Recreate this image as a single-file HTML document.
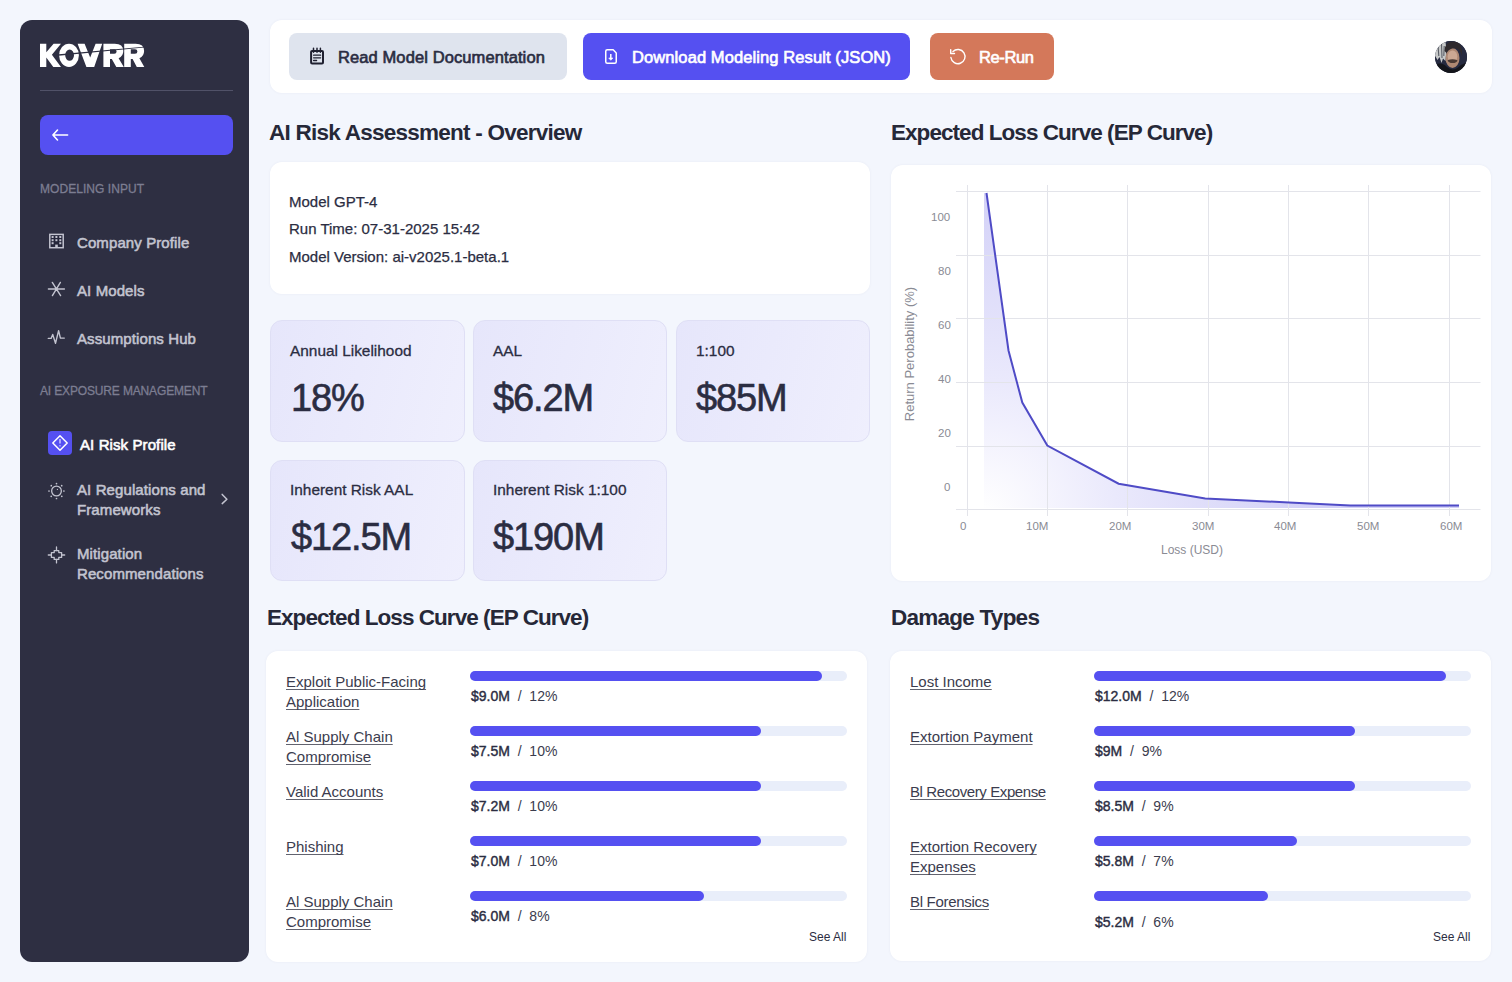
<!DOCTYPE html>
<html><head><meta charset="utf-8">
<style>
*{box-sizing:border-box;margin:0;padding:0}
html,body{width:1512px;height:982px;overflow:hidden;background:#F3F6FD;font-family:"Liberation Sans",sans-serif;color:#2B2D42}
.a{position:absolute}
.t{position:absolute;white-space:nowrap;line-height:1}
#side{left:20px;top:20px;width:229px;height:942px;background:#2E2F42;border-radius:12px}
.sec{font-size:12px;color:#7C7D91;letter-spacing:0.05px;-webkit-text-stroke:0.3px #7C7D91}
.item{font-size:15px;font-weight:400;color:#C3C4D0;letter-spacing:0.1px;-webkit-text-stroke:0.55px #C3C4D0}
.card{background:#fff;border-radius:12px;box-shadow:0 0 3px rgba(40,40,90,0.05)}
.btn{border-radius:8px;top:33px;height:47px}
.btxt{font-size:16.5px;font-weight:400;letter-spacing:0.1px;-webkit-text-stroke:0.65px currentColor}
.h2{font-size:22.5px;font-weight:700;color:#262838;letter-spacing:-0.75px}
.metric{border-radius:12px;border:1px solid #DFDFF5;background:linear-gradient(105deg,#E6E6FB 0%,#EAEAFC 45%,#EFEFFD 100%)}
.ml{font-size:15.4px;color:#2B2D42;-webkit-text-stroke:0.3px #2B2D42}
.mv{font-size:38px;color:#2B2D42;-webkit-text-stroke:0.6px #2B2D42;letter-spacing:-1.1px}
.lbl{font-size:15px;color:#3B3C4E;text-decoration:underline;text-underline-offset:1.5px;text-decoration-thickness:1px;text-decoration-skip-ink:none;text-decoration-color:#62636F;line-height:20px;white-space:normal}
.track{height:10px;border-radius:5px;background:#E9EEFA}
.fill{height:10px;border-radius:5px;background:#5550F1;left:0;top:0}
.val{font-size:14px;color:#3B3C4E}
.val b{color:#2B2D42;font-weight:400;-webkit-text-stroke:0.4px #2B2D42}
.ax{font-size:11.5px;color:#8A8B94}
</style></head><body>

<!-- SIDEBAR -->
<div id="side" class="a"></div>
<svg class="a" style="left:0;top:0" width="260" height="100"><g fill="#FFFFFF">
  <path d="M40 43.7H46.3V52.3L53.6 43.7H61L51.9 54.8L61 66.9H53.3L46.3 57.4V66.9H40Z"/>
  <path fill-rule="evenodd" d="M69 43.7A9.9 11.6 0 1 1 69 66.9A9.9 11.6 0 1 1 69 43.7ZM69.6 49.6A4.4 5.6 0 1 0 69.6 60.8A4.4 5.6 0 1 0 69.6 49.6Z"/>
  <path d="M77.6 43.7H84.6L90.2 57.5L95.6 43.7H102.2L94.2 66.9H86.4Z"/>
  <path fill-rule="evenodd" d="M103.4 43.7H114.8Q123.3 43.7 123.3 51Q123.3 56.3 118.6 58.2L123.8 66.9H116.3L111.8 59H110V66.9H103.4ZM110 49.2V53.8H114.2Q116.6 53.8 116.6 51.5Q116.6 49.2 114.2 49.2Z"/>
  <path fill-rule="evenodd" d="M124.2 43.7H135.6Q144.1 43.7 144.1 51Q144.1 56.3 139.4 58.2L144.3 66.9H136.8L132.6 59H130.8V66.9H124.2ZM130.8 49.2V53.8H135Q137.4 53.8 137.4 51.5Q137.4 49.2 135 49.2Z"/>
</g>
<path d="M56 54.6L144 46.8L144 47.5L56 56Z" fill="#2E2F42"/>
</svg>
<div class="a" style="left:40px;top:90px;width:193px;height:1px;background:#515268"></div>
<div class="a" style="left:40px;top:115px;width:193px;height:40px;background:#5550F1;border-radius:8px"></div>
<svg class="a" style="left:44px;top:122px" width="32" height="26" viewBox="0 0 32 26" fill="none" stroke="#fff" stroke-width="1.6" stroke-linecap="round" stroke-linejoin="round"><path d="M8.9 13H23.6M13.5 8L8.9 13L13.5 18"/></svg>

<div class="t sec" style="left:40px;top:183px">MODELING INPUT</div>

<svg class="a" style="left:44px;top:228px" width="26" height="26" viewBox="0 0 26 26"><rect x="5.8" y="6.4" width="13.4" height="13.3" fill="#25263A" stroke="#C3C4D0" stroke-width="1.5"/><g fill="#C3C4D0"><rect x="7.6" y="8" width="2" height="2"/><rect x="11.4" y="8" width="2" height="2"/><rect x="15.3" y="8" width="2" height="2"/><rect x="7.6" y="11.2" width="2" height="2"/><rect x="11.4" y="11.2" width="2" height="2"/><rect x="15.3" y="11.2" width="2" height="2"/><rect x="7.6" y="14.2" width="2" height="2"/><rect x="15.3" y="14.2" width="2" height="2"/><rect x="11.2" y="16.6" width="2.6" height="2.6"/></g></svg>
<div class="t item" style="left:77px;top:235px">Company Profile</div>

<svg class="a" style="left:44px;top:276px" width="26" height="26" viewBox="0 0 26 26" fill="none" stroke="#C3C4D0" stroke-width="1.4" stroke-linecap="round"><path d="M4.4 13H20.4M8.3 6.4L16.6 19.6M16.4 6.4L8.4 19.6"/></svg>
<div class="t item" style="left:77px;top:283px">AI Models</div>

<svg class="a" style="left:44px;top:324px" width="26" height="26" viewBox="0 0 26 26" fill="none" stroke="#C3C4D0" stroke-width="1.4" stroke-linecap="round" stroke-linejoin="round"><path d="M4.3 14.4H7.1L8.7 10.4L11.5 19.3L14.6 6.6L16.4 14.1H20.3"/></svg>
<div class="t item" style="left:77px;top:331px">Assumptions Hub</div>

<div class="t sec" style="left:40px;top:385px;letter-spacing:-0.15px">AI EXPOSURE MANAGEMENT</div>

<div class="a" style="left:48px;top:431px;width:24px;height:24px;background:#5550F1;border-radius:4px"></div>
<svg class="a" style="left:48px;top:431px" width="24" height="24" viewBox="0 0 24 24" fill="none" stroke-width="1.5"><path d="M12 4.8L19.2 12L12 19.2L4.8 12Z" stroke="#fff" stroke-linejoin="round"/><path d="M12 8V12.6" stroke="#C8C4FF"/><path d="M12 14.1V15.4" stroke="#B0AAFF"/></svg>
<div class="t item" style="left:80px;top:437px;color:#fff;-webkit-text-stroke:0.6px #fff">AI Risk Profile</div>

<svg class="a" style="left:43px;top:478px" width="26" height="26" viewBox="0 0 26 26"><circle cx="13.5" cy="13" r="4.85" fill="none" stroke="#C3C4D0" stroke-width="1.3"/><g fill="#C3C4D0"><circle cx="13.5" cy="5.6" r="0.85"/><circle cx="18.7" cy="7.7" r="0.85"/><circle cx="20.9" cy="13" r="0.85"/><circle cx="18.8" cy="18.3" r="0.85"/><circle cx="13.5" cy="20.5" r="0.85"/><circle cx="8.2" cy="18.3" r="0.85"/><circle cx="6" cy="13" r="0.85"/><circle cx="8.3" cy="7.7" r="0.85"/><circle cx="14.4" cy="11.4" r="0.6"/></g></svg>
<div class="t item" style="left:77px;top:480px;line-height:20px">AI Regulations and<br>Frameworks</div>
<svg class="a" style="left:212px;top:486px" width="24" height="24" viewBox="0 0 24 24" fill="none" stroke="#C3C4D0" stroke-width="1.5" stroke-linecap="round" stroke-linejoin="round"><path d="M10.2 8.4L14.9 13.3L10.2 17.6"/></svg>

<svg class="a" style="left:43px;top:542px" width="26" height="26" viewBox="0 0 26 26" fill="none" stroke="#C3C4D0" stroke-width="1.3" stroke-linejoin="round"><path d="M11.2 8.6H15.8V10.6H18.6V15.4H15.8V17.4H11.2V15.4H8.4V10.6H11.2Z"/><path d="M13.5 5V8.6M13.5 17.4V20.9M5.3 13H8.4M18.6 13H21.7" stroke-linecap="round"/></svg>
<div class="t item" style="left:77px;top:544px;line-height:20px">Mitigation<br>Recommendations</div>

<!-- HEADER -->
<div class="a card" style="left:270px;top:20px;width:1222px;height:73px"></div>
<div class="a btn" style="left:289px;width:278px;background:#DFE4EE"></div>
<svg class="a" style="left:300px;top:40px" width="35" height="32" viewBox="0 0 35 32" fill="none" stroke="#1F2030" stroke-linecap="round"><rect x="11.1" y="10.9" width="11.9" height="12.5" rx="1" stroke-width="2"/><path d="M13.5 8.2V12.2M17 8.2V12.2M20.4 8.2V12.2" stroke-width="1.5"/><path d="M13.6 15.2H20.6M13.6 17.8H20.6M13.6 20.5H16.6" stroke-width="1.3"/></svg>
<div class="t btxt" style="left:338px;top:49px;color:#2B2D42">Read Model Documentation</div>

<div class="a btn" style="left:583px;width:327px;background:#5550F1"></div>
<svg class="a" style="left:598px;top:42px" width="28" height="28" viewBox="0 0 28 28" fill="none" stroke="#fff" stroke-width="1.5" stroke-linejoin="round"><path d="M9.3 7.75H15.2L18.25 10.9V19.7Q18.25 21.25 16.7 21.25H9.3Q7.75 21.25 7.75 19.7V9.3Q7.75 7.75 9.3 7.75Z"/><path d="M12.8 12V16.4"/><path d="M10.7 16L14.9 16L12.8 18.3Z" fill="#fff" stroke-width="0.6"/></svg>
<div class="t btxt" style="left:632px;top:49px;color:#fff">Download Modeling Result (JSON)</div>

<div class="a btn" style="left:930px;width:124px;background:#D4785A"></div>
<svg class="a" style="left:944px;top:42px" width="28" height="28" viewBox="0 0 28 28" fill="none" stroke="#fff" stroke-width="1.4" stroke-linecap="round" stroke-linejoin="round"><path d="M6.9 15.5A7.1 7.1 0 1 0 8.98 9.48"/><path d="M6.7 7.6V11.5H10.5"/></svg>
<div class="t btxt" style="left:979px;top:48.5px;color:#fff;font-size:16.5px;letter-spacing:-0.4px">Re-Run</div>

<div class="a" style="left:1435px;top:41px;width:32px;height:32px;border-radius:50%;overflow:hidden;background:#262A40"><svg style="display:block;filter:blur(0.45px)" width="32" height="32" viewBox="0 0 32 32">
<rect width="32" height="32" fill="#262A40"/>
<path d="M-1 2L10.5 1L11.5 9L10.5 20L8 17.5L6.5 22L4.5 16L2.5 19L-1 13Z" fill="#C6C8C8"/>
<path d="M3 4L3.8 15M6.5 3L7 17M9.2 5L8.8 15" stroke="#5A5E66" stroke-width="1.1"/>
<ellipse cx="17.5" cy="17" rx="7" ry="10" fill="#AE8873"/>
<ellipse cx="17.5" cy="15.5" rx="4.8" ry="6" fill="#CCA893"/>
<path d="M9.5 10Q10 0 19 0.5Q28 1 27 15Q25.5 8 21 7.5Q15 6.5 11.5 12Z" fill="#2F2A2D"/>
<path d="M12.5 19.2Q17.5 17.5 22.5 19.2Q22 22 17.5 22Q13.5 22 12.5 19.2Z" fill="#4B3A34"/>
<path d="M-1 24Q7 20 12 26Q17.5 30.5 23 26.5Q27 23 33 21V33H-1Z" fill="#14151B"/>
</svg></div>

<!-- OVERVIEW -->
<div class="t h2" style="left:269px;top:121.5px">AI Risk Assessment - Overview</div>
<div class="a card" style="left:270px;top:162px;width:600px;height:132px"></div>
<div class="t" style="left:289px;top:187.8px;font-size:15px;color:#2B2D42;line-height:27.4px;-webkit-text-stroke:0.25px #2B2D42">Model GPT-4<br>Run Time: 07-31-2025 15:42<br>Model Version: ai-v2025.1-beta.1</div>

<div class="a metric" style="left:270px;top:320px;width:194.5px;height:121.5px"></div>
<div class="a metric" style="left:473px;top:320px;width:194px;height:121.5px"></div>
<div class="a metric" style="left:675.5px;top:320px;width:194.5px;height:121.5px"></div>
<div class="a metric" style="left:270px;top:459.5px;width:194.5px;height:121.5px"></div>
<div class="a metric" style="left:473px;top:459.5px;width:194px;height:121.5px"></div>

<div class="t ml" style="left:290px;top:343px">Annual Likelihood</div>
<div class="t mv" style="left:291px;top:379px">18%</div>
<div class="t ml" style="left:493px;top:343px">AAL</div>
<div class="t mv" style="left:493px;top:379px">$6.2M</div>
<div class="t ml" style="left:696px;top:343px">1:100</div>
<div class="t mv" style="left:696px;top:379px">$85M</div>
<div class="t ml" style="left:290px;top:482px">Inherent Risk AAL</div>
<div class="t mv" style="left:291px;top:518px">$12.5M</div>
<div class="t ml" style="left:493px;top:482px">Inherent Risk 1:100</div>
<div class="t mv" style="left:493px;top:518px">$190M</div>

<!-- CHART -->
<div class="t h2" style="left:891px;top:121.5px;letter-spacing:-0.95px">Expected Loss Curve (EP Curve)</div>
<div class="a card" style="left:891px;top:165px;width:600px;height:416px"></div>
<svg class="a" style="left:0;top:0" width="1512" height="982">
  <defs>
    <radialGradient id="gf" gradientUnits="userSpaceOnUse" cx="984" cy="512" r="330">
      <stop offset="0" stop-color="#FFFFFF"/>
      <stop offset="0.4" stop-color="#EAE9FC"/>
      <stop offset="1" stop-color="#D2D0F7"/>
    </radialGradient>
  </defs>
  
  <path d="M984 193 L986.5 193 L1008.5 350.5 L1022.3 402.6 L1047.3 445.6 L1118.6 483.7 L1205.2 498.6 L1289 502.5 L1350.3 505.4 L1459 505.4 L1459 508 L984 508 Z" fill="url(#gf)"/>
  <g stroke="#E3E4EA" stroke-width="1">
    <path d="M956 191.5H1480.5M956 255.5H1480.5M956 318.5H1480.5M956 382.5H1480.5M956 446.5H1480.5M956 509.5H1480.5"/>
    <path d="M967.5 185V516M1047.5 185V516M1127.5 185V516M1208.5 185V516M1288.5 185V516M1368.5 185V516M1449.5 185V516"/>
  </g>
  <path d="M986.5 193 L1008.5 350.5 L1022.3 402.6 L1047.3 445.6 L1118.6 483.7 L1205.2 498.6 L1289 502.5 L1350.3 505.4 L1459 505.4" fill="none" stroke="#4F4BC6" stroke-width="2"/>
</svg>
<div class="t ax" style="left:931px;top:212px">100</div>
<div class="t ax" style="left:938px;top:266px">80</div>
<div class="t ax" style="left:938px;top:320px">60</div>
<div class="t ax" style="left:938px;top:374px">40</div>
<div class="t ax" style="left:938px;top:428px">20</div>
<div class="t ax" style="left:944px;top:482px">0</div>
<div class="t ax" style="left:960px;top:521px">0</div>
<div class="t ax" style="left:1026px;top:521px">10M</div>
<div class="t ax" style="left:1109px;top:521px">20M</div>
<div class="t ax" style="left:1192px;top:521px">30M</div>
<div class="t ax" style="left:1274px;top:521px">40M</div>
<div class="t ax" style="left:1357px;top:521px">50M</div>
<div class="t ax" style="left:1440px;top:521px">60M</div>
<div class="t ax" style="left:1161px;top:544px;font-size:12px">Loss (USD)</div>
<div class="t ax" style="left:908.5px;top:354px;font-size:13px;transform:translate(-50%,-50%) rotate(-90deg)">Return Perobability (%)</div>

<!-- BOTTOM LEFT -->
<div class="t h2" style="left:267px;top:606.5px;letter-spacing:-0.95px">Expected Loss Curve (EP Curve)</div>
<div class="a card" style="left:266px;top:651px;width:601px;height:311px"></div>

<div class="t lbl" style="left:286px;top:672px">Exploit Public-Facing<br>Application</div>
<div class="a track" style="left:470px;top:671px;width:377px"><div class="a fill" style="width:352.0px"></div></div>
<div class="t val" style="left:471px;top:688.5px"><b>$9.0M</b>&nbsp;&nbsp;/&nbsp;&nbsp;12%</div>
<div class="t lbl" style="left:286px;top:727px">Al Supply Chain<br>Compromise</div>
<div class="a track" style="left:470px;top:726px;width:377px"><div class="a fill" style="width:291.0px"></div></div>
<div class="t val" style="left:471px;top:743.5px"><b>$7.5M</b>&nbsp;&nbsp;/&nbsp;&nbsp;10%</div>
<div class="t lbl" style="left:286px;top:782px">Valid Accounts</div>
<div class="a track" style="left:470px;top:780.5px;width:377px"><div class="a fill" style="width:291.0px"></div></div>
<div class="t val" style="left:471px;top:798.5px"><b>$7.2M</b>&nbsp;&nbsp;/&nbsp;&nbsp;10%</div>
<div class="t lbl" style="left:286px;top:837px">Phishing</div>
<div class="a track" style="left:470px;top:835.5px;width:377px"><div class="a fill" style="width:291.0px"></div></div>
<div class="t val" style="left:471px;top:853.5px"><b>$7.0M</b>&nbsp;&nbsp;/&nbsp;&nbsp;10%</div>
<div class="t lbl" style="left:286px;top:892px">Al Supply Chain<br>Compromise</div>
<div class="a track" style="left:470px;top:890.5px;width:377px"><div class="a fill" style="width:233.5px"></div></div>
<div class="t val" style="left:471px;top:908.5px"><b>$6.0M</b>&nbsp;&nbsp;/&nbsp;&nbsp;8%</div>
<div class="t" style="left:809px;top:931px;font-size:12px;color:#2B2D42">See All</div>

<!-- BOTTOM RIGHT -->
<div class="t h2" style="left:891px;top:606.5px">Damage Types</div>
<div class="a card" style="left:890px;top:651px;width:601px;height:310px"></div>

<div class="t lbl" style="left:910px;top:672px">Lost Income</div>
<div class="a track" style="left:1094px;top:671px;width:376.5px"><div class="a fill" style="width:351.5px"></div></div>
<div class="t val" style="left:1095px;top:688.5px"><b>$12.0M</b>&nbsp;&nbsp;/&nbsp;&nbsp;12%</div>
<div class="t lbl" style="left:910px;top:727px">Extortion Payment</div>
<div class="a track" style="left:1094px;top:726px;width:376.5px"><div class="a fill" style="width:261.0px"></div></div>
<div class="t val" style="left:1095px;top:743.5px"><b>$9M</b>&nbsp;&nbsp;/&nbsp;&nbsp;9%</div>
<div class="t lbl" style="left:910px;top:782px;letter-spacing:-0.4px">Bl Recovery Expense</div>
<div class="a track" style="left:1094px;top:780.5px;width:376.5px"><div class="a fill" style="width:261.0px"></div></div>
<div class="t val" style="left:1095px;top:798.5px"><b>$8.5M</b>&nbsp;&nbsp;/&nbsp;&nbsp;9%</div>
<div class="t lbl" style="left:910px;top:837px">Extortion Recovery<br>Expenses</div>
<div class="a track" style="left:1094px;top:835.5px;width:376.5px"><div class="a fill" style="width:203.0px"></div></div>
<div class="t val" style="left:1095px;top:853.5px"><b>$5.8M</b>&nbsp;&nbsp;/&nbsp;&nbsp;7%</div>
<div class="t lbl" style="left:910px;top:892px;letter-spacing:-0.3px">Bl Forensics</div>
<div class="a track" style="left:1094px;top:890.5px;width:376.5px"><div class="a fill" style="width:174.0px"></div></div>
<div class="t val" style="left:1095px;top:914.5px"><b>$5.2M</b>&nbsp;&nbsp;/&nbsp;&nbsp;6%</div>
<div class="t" style="left:1433px;top:931px;font-size:12px;color:#2B2D42">See All</div>
</body></html>
